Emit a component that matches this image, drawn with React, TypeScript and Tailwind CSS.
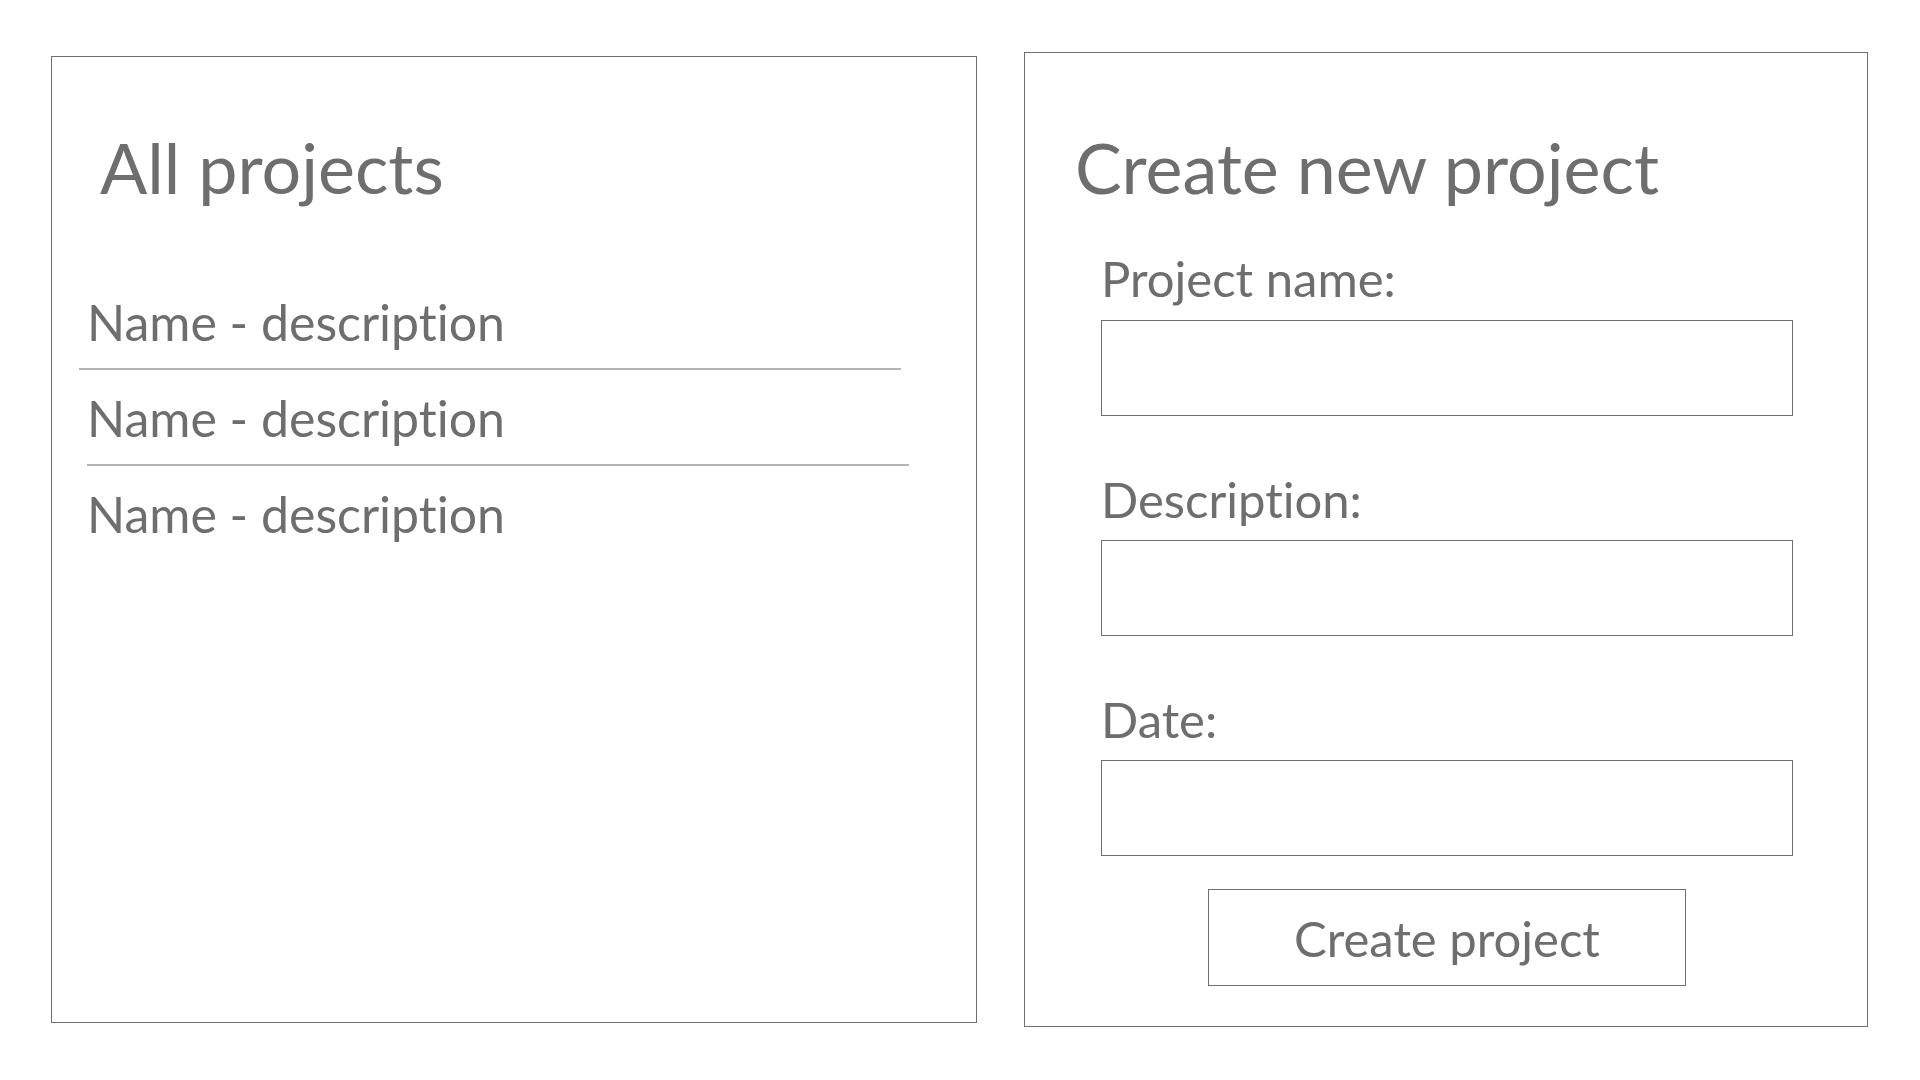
const font = { fontFamily: "Lato, 'Open Sans', sans-serif" };

const projects = ["Name - description", "Name - description", "Name - description"];

function ProjectList() {
  return (
    <section className="mt-[4px] h-[967px] w-[926px] border border-[#6f6f6f] pt-[75px]">
      <h1 className="pl-[48px] text-[70px] leading-[71px]">All projects</h1>
      <ul className="mt-[93px] pl-[35px]">
        <li className="text-[50px] leading-[52px]">{projects[0]}</li>
        <li className="mt-[20px] ml-[-8px] h-[2px] w-[822px] bg-[#b4b4b4]" />
        <li className="mt-[22px] text-[50px] leading-[52px]">{projects[1]}</li>
        <li className="mt-[20px] h-[2px] w-[822px] bg-[#b4b4b4]" />
        <li className="mt-[22px] text-[50px] leading-[52px]">{projects[2]}</li>
      </ul>
    </section>
  );
}

function Field({ label, first }: { label: string; first?: boolean }) {
  return (
    <div className={first ? "mt-[50px]" : "mt-[58px]"}>
      <label className="block text-[49px] leading-[50px]">{label}</label>
      <input
        type="text"
        className={`${first ? "mt-[17px]" : "mt-[16px]"} block h-[96px] w-full border border-[#6f6f6f] bg-white outline-none`}
      />
    </div>
  );
}

function CreateProject() {
  return (
    <section className="h-[975px] w-[844px] border border-[#6f6f6f] pt-[79px]">
      <h1 className="pl-[50px] text-[70px] leading-[71px]">Create new project</h1>
      <form className="w-[768px] pl-[76px]" onSubmit={(e) => e.preventDefault()}>
        <Field label="Project name:" first />
        <Field label="Description:" />
        <Field label="Date:" />
        <div className="mt-[33px] flex justify-center">
          <button
            type="submit"
            className="flex h-[97px] w-[478px] items-center justify-center border border-[#6f6f6f] bg-white text-[49px] leading-[50px] text-[#6e6e6e]"
          >
            Create project
          </button>
        </div>
      </form>
    </section>
  );
}

export default function App() {
  return (
    <main
      style={font}
      className="flex min-h-screen items-start gap-[47px] bg-white pl-[51px] pt-[52px] text-[#6e6e6e] [font-variant-ligatures:none]"
    >
      <ProjectList />
      <CreateProject />
    </main>
  );
}
